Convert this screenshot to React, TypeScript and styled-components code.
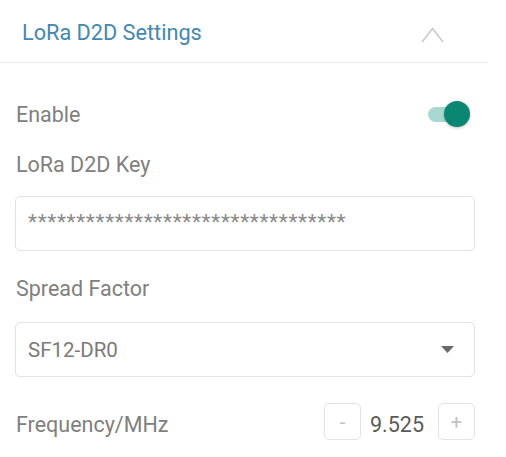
import React from "react";
import styled, { createGlobalStyle } from "styled-components";

const GlobalStyle = createGlobalStyle`
  html, body {
    margin: 0;
    padding: 0;
    background: #fff;
  }
  body {
    font-family: Roboto, "Liberation Sans", sans-serif;
  }
`;

const Panel = styled.div`
  width: 488px;
  background: #fff;
`;

const Header = styled.div`
  display: flex;
  align-items: center;
  justify-content: space-between;
  height: 63px;
  padding: 0 44px 0 22px;
  border-bottom: 1px solid #ececec;
  box-sizing: border-box;
`;

const Title = styled.span`
  font-size: 21.7px;
  color: #4088b6;
  margin-top: 3px;
`;

const ChevronIcon = styled.svg`
  margin-top: 8px;
`;

const Body = styled.div`
  display: flex;
  flex-direction: column;
  padding: 26px 13px 0 15px;
`;

const Row = styled.div<{ $height: number; $top?: number }>`
  display: flex;
  align-items: center;
  justify-content: space-between;
  height: ${(p) => p.$height}px;
  margin-top: ${(p) => p.$top ?? 0}px;
`;

const Label = styled.span<{ $drop?: number }>`
  font-size: 21.5px;
  color: #808080;
  padding-left: 1px;
  margin-top: ${(p) => p.$drop ?? 0}px;
`;

const Field = styled.div<{ $top: number }>`
  display: flex;
  align-items: center;
  justify-content: space-between;
  height: 55px;
  margin-top: ${(p) => p.$top}px;
  padding: 0 20px 0 12px;
  border: 1px solid #e3e3e3;
  border-radius: 5px;
  box-sizing: border-box;
`;

const Masked = styled.span`
  font-size: 21px;
  color: #8a8a8a;
  letter-spacing: 0.6px;
  margin-top: -3px;
`;

const SelectText = styled.span`
  font-size: 20.5px;
  color: #7a7a7a;
`;

const Toggle = styled.div`
  position: relative;
  width: 34px;
  height: 15px;
  margin-right: 13px;
  border-radius: 8px;
  background: #a8d8cf;
`;

const Knob = styled.div`
  position: absolute;
  right: -8px;
  top: 50%;
  width: 26px;
  height: 26px;
  margin-top: -13px;
  border-radius: 50%;
  background: #0a8773;
  box-shadow: 0 1px 3px rgba(0, 0, 0, 0.25);
`;

const Stepper = styled.div`
  display: flex;
  align-items: center;
  gap: 9px;
`;

const StepButton = styled.div`
  display: flex;
  align-items: center;
  justify-content: center;
  width: 37px;
  height: 37px;
  border: 1px solid #e3e3e3;
  border-radius: 5px;
  box-sizing: border-box;
  color: #c2c2c2;
  font-size: 20px;
`;

const Value = styled.span`
  width: 59px;
  font-size: 21.5px;
  color: #5a5a5a;
  margin-top: 5px;
`;

const Chevron = () => (
  <ChevronIcon width="23" height="16" viewBox="0 0 23 16">
    <polyline points="1,15 11.5,1.5 22,15" fill="none" stroke="#cacaca" strokeWidth="1.6" />
  </ChevronIcon>
);

const Caret = () => (
  <svg width="13" height="7" viewBox="0 0 13 7">
    <polygon points="0,0 13,0 6.5,7" fill="#6a6a6a" />
  </svg>
);

export default function App() {
  return (
    <>
      <GlobalStyle />
      <Panel>
        <Header>
          <Title>LoRa D2D Settings</Title>
          <Chevron />
        </Header>
        <Body>
          <Row $height={50}>
            <Label>Enable</Label>
            <Toggle>
              <Knob />
            </Toggle>
          </Row>
          <Row $height={50}>
            <Label>LoRa D2D Key</Label>
          </Row>
          <Field $top={7}>
            <Masked>{"*".repeat(33)}</Masked>
          </Field>
          <Row $height={48} $top={13}>
            <Label>Spread Factor</Label>
          </Row>
          <Field $top={10}>
            <SelectText>SF12-DR0</SelectText>
            <Caret />
          </Field>
          <Row $height={37} $top={26}>
            <Label $drop={6}>Frequency/MHz</Label>
            <Stepper>
              <StepButton>-</StepButton>
              <Value>9.525</Value>
              <StepButton>+</StepButton>
            </Stepper>
          </Row>
        </Body>
      </Panel>
    </>
  );
}
